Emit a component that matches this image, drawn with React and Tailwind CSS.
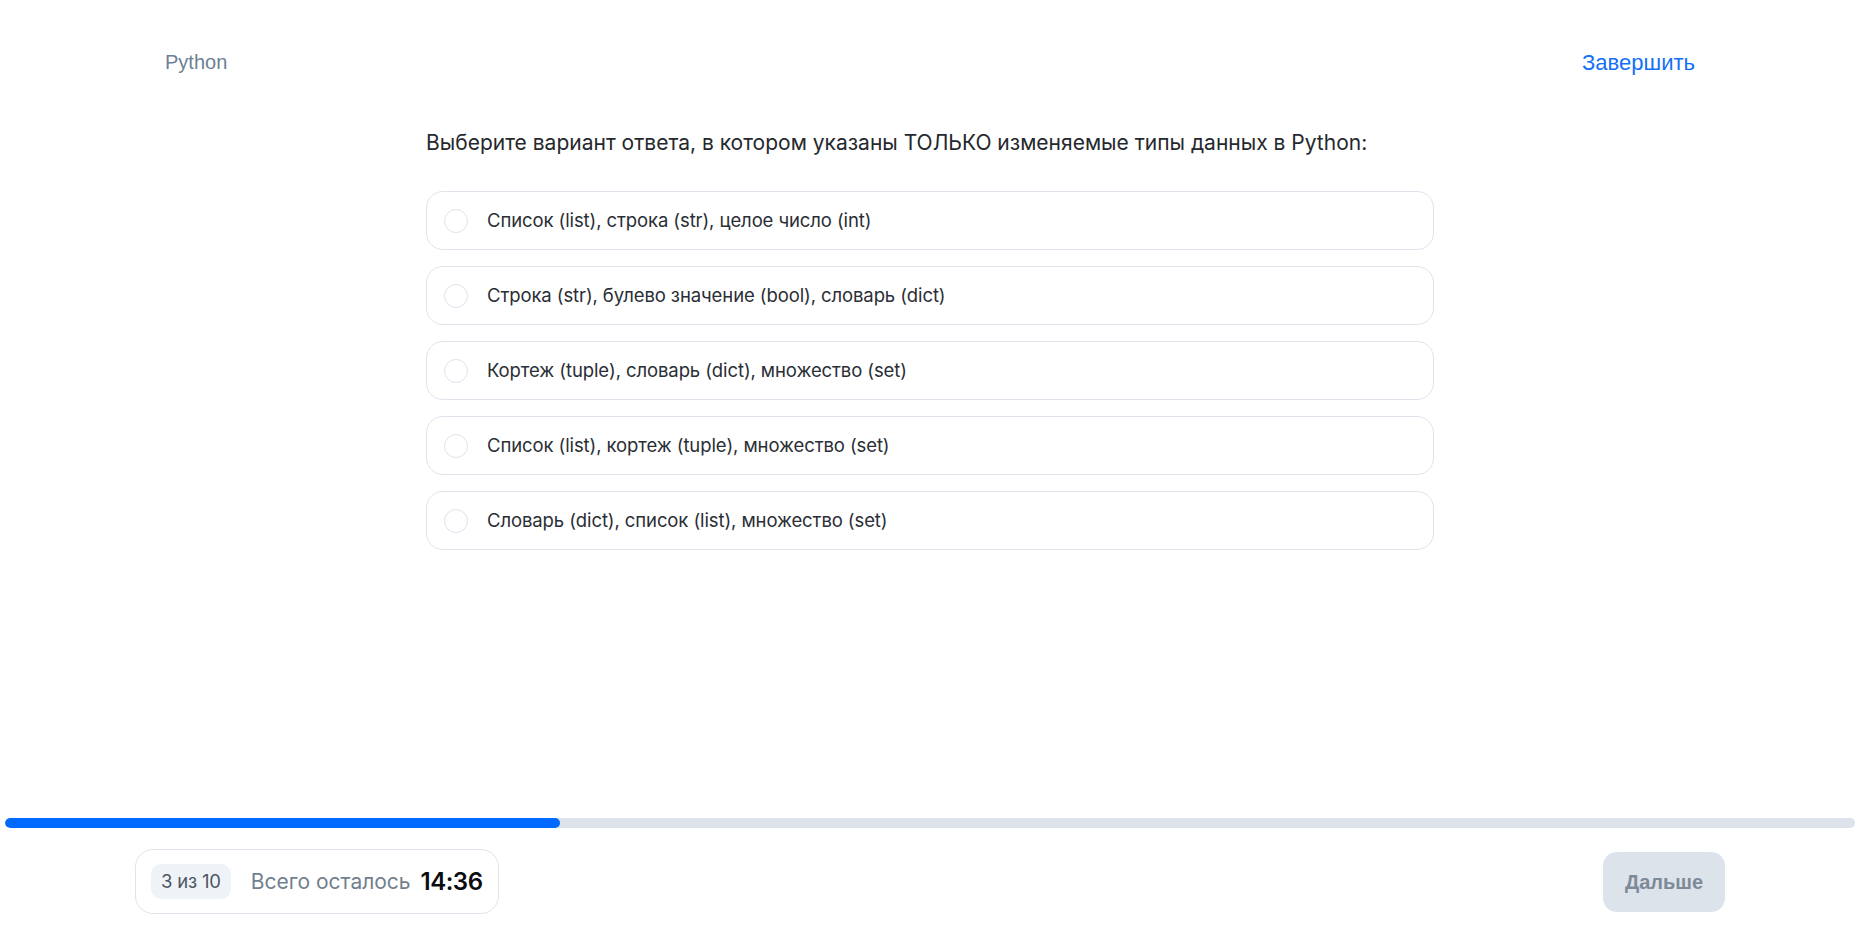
const OPTIONS = [
  "Список (list), строка (str), целое число (int)",
  "Строка (str), булево значение (bool), словарь (dict)",
  "Кортеж (tuple), словарь (dict), множество (set)",
  "Список (list), кортеж (tuple), множество (set)",
  "Словарь (dict), список (list), множество (set)",
];

export default function App() {
  const current = 3;
  const total = 10;
  const progress = (560 - 5) / (1855 - 5);

  return (
    <div className="h-screen w-full flex flex-col bg-white font-['Inter',sans-serif] overflow-hidden">
      {/* Header */}
      <div className="flex items-center justify-between pt-[48px] px-[165px] h-[76px]">
        <span className="font-['Liberation_Sans',sans-serif] text-[20px] text-[#6e7f95]">Python</span>
        <button className="font-['Liberation_Sans',sans-serif] text-[22px] text-[#1470f5]">Завершить</button>
      </div>

      {/* Question */}
      <div className="w-[1008px] mx-auto mt-[53px]">
        <p className="text-[21px] leading-[28px] text-[#25282d]">
          Выберите вариант ответа, в котором указаны ТОЛЬКО изменяемые типы данных в Python:
        </p>
        <div className="mt-[34px] flex flex-col gap-[16px]">
          {OPTIONS.map((opt) => (
            <label
              key={opt}
              className="h-[59px] flex items-center gap-[19px] pl-[17px] pr-6 border border-[#dfe4ec] rounded-[17px] cursor-pointer"
            >
              <span className="w-[24px] h-[24px] rounded-full border border-[#dde3eb] shrink-0" />
              <span className="text-[18.5px] text-[#2a2e35] tracking-[-0.1px]">{opt}</span>
            </label>
          ))}
        </div>
      </div>

      <div className="flex-1" />

      {/* Progress */}
      <div className="px-[5px]">
        <div className="h-[10px] rounded-full bg-[#dde3ea] overflow-hidden">
          <div className="h-full rounded-full bg-[#0069ff]" style={{ width: `${progress * 100}%` }} />
        </div>
      </div>

      {/* Footer */}
      <div className="flex items-center justify-between px-[135px] pt-[21px] pb-[21px]">
        <div className="h-[65px] flex items-center gap-[20px] pl-[15px] pr-[16px] border border-[#dfe4ec] rounded-[18px]">
          <span className="h-[35px] px-[10px] flex items-center rounded-[10px] bg-[#eff3f8] text-[18.5px] text-[#4b5563] tracking-[-0.2px]">
            {current} из {total}
          </span>
          <span className="text-[21px] text-[#717f8e]">Всего осталось</span>
          <span className="text-[24px] font-semibold text-[#0b0d10] tracking-[-0.5px] -ml-[10px]">14:36</span>
        </div>
        <button className="w-[122px] h-[60px] rounded-[14px] bg-[#dde3ea] font-['Liberation_Sans',sans-serif] font-bold text-[20px] text-[#7d8a99]">
          Дальше
        </button>
      </div>
    </div>
  );
}
